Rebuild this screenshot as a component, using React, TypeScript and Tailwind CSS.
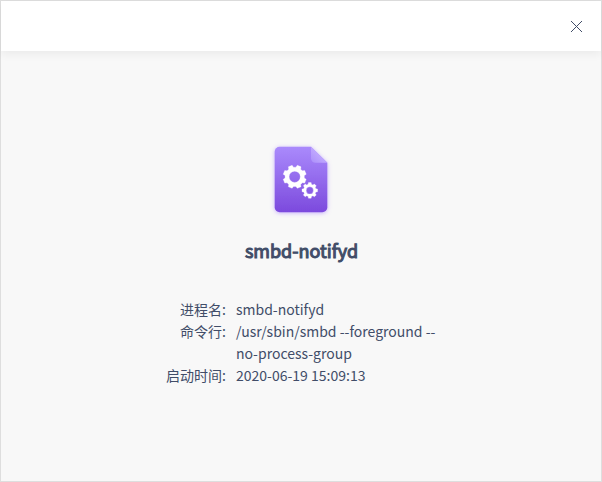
import React from 'react';

const gear = (cx: number, cy: number, teeth: number, outer: number, root: number, hole: number, turn: number) => {
  const step = (Math.PI * 2) / teeth;
  const pts: string[] = [];
  for (let i = 0; i < teeth; i++) {
    const a = i * step + turn;
    [[root, -0.34], [outer, -0.22], [outer, 0.22], [root, 0.34]].forEach(([r, f]) => {
      pts.push(`${(cx + r * Math.cos(a + f * step)).toFixed(2)} ${(cy + r * Math.sin(a + f * step)).toFixed(2)}`);
    });
  }
  return `M${pts.join('L')}Z M${cx - hole} ${cy}a${hole} ${hole} 0 1 0 ${hole * 2} 0a${hole} ${hole} 0 1 0 ${-hole * 2} 0Z`;
};

function ProcessIcon() {
  return (
    <svg width="64" height="76" viewBox="0 0 64 76" className="block">
      <defs>
        <linearGradient id="page" x1="0" y1="0" x2="0" y2="1">
          <stop offset="0" stopColor="#aa8afc" />
          <stop offset="1" stopColor="#7c4add" />
        </linearGradient>
        <linearGradient id="fold" x1="1" y1="0" x2="0" y2="1">
          <stop offset="0.4" stopColor="#c3acff" />
          <stop offset="1" stopColor="#ab8ffa" />
        </linearGradient>
        <filter id="shade" x="-20%" y="-20%" width="140%" height="140%">
          <feDropShadow dx="0" dy="0.8" stdDeviation="2" floodColor="#9a6cff" floodOpacity="0.55" />
        </filter>
      </defs>
      <path d="M10.700 4.700H42l16.300 16v44.500a5 5 0 0 1-5 5H10.700a5 5 0 0 1-5-5V9.700a5 5 0 0 1 5-5Z" fill="url(#page)" filter="url(#shade)" />
      <path d="M42 4.700v11.500a4.500 4.500 0 0 0 4.500 4.500H58.300Z" fill="url(#fold)" />
      <path d={gear(25.7, 34.800, 8, 11.800, 9.700, 5.600, Math.PI / 8)} fill="white" stroke="white" strokeWidth="0.300" strokeLinejoin="round" fillRule="evenodd" />
      <path d={gear(40.8, 48.400, 8, 7.900, 6.300, 3.600, 0)} fill="white" stroke="white" strokeWidth="0.300" strokeLinejoin="round" fillRule="evenodd" />
    </svg>
  );
}

const rows = [
  ['进程名:', 'smbd-notifyd'],
  ['命令行:', '/usr/sbin/smbd --foreground --no-process-group'],
  ['启动时间:', '2020-06-19 15:09:13'],
];

export default function App() {
  return (
    <main className="flex h-[482px] w-[602px] flex-col border border-[#dedede] bg-[#f8f8f8] font-['Noto_Sans_CJK_SC',sans-serif] text-[#414d68]">
      <header className="flex h-[50px] shrink-0 items-center justify-end bg-white pr-[19px] shadow-[0_3px_9px_rgba(0,0,0,0.06)]">
        <button aria-label="关闭" className="mt-px">
          <svg width="11" height="11" viewBox="0 0 11 11" className="block" stroke="#414d68" fill="none">
            <path d="M0 0l11 11M11 0L0 11" />
          </svg>
        </button>
      </header>
      <section className="flex flex-col items-center pt-[91px]">
        <ProcessIcon />
        <h1 className="mt-[19px] ml-px text-[18px] leading-[27px] font-normal [-webkit-text-stroke:1.05px_#414d68]">smbd-notifyd</h1>
        <dl className="mt-[34px] ml-[2px] grid w-[272px] grid-cols-[60px_202px] gap-x-[10px] text-[14px] leading-[22px]">
          {rows.map(([label, value]) => (
            <React.Fragment key={label}>
              <dt className="text-right whitespace-nowrap">{label}</dt>
              <dd>{value}</dd>
            </React.Fragment>
          ))}
        </dl>
      </section>
    </main>
  );
}
